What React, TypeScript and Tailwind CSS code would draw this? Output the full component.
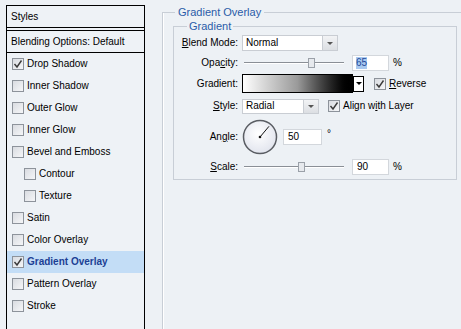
import React from 'react';

type Item = { label: string; checked?: boolean; indent?: boolean; active?: boolean };

const items: Item[] = [
  { label: 'Drop Shadow', checked: true },
  { label: 'Inner Shadow' },
  { label: 'Outer Glow' },
  { label: 'Inner Glow' },
  { label: 'Bevel and Emboss' },
  { label: 'Contour', indent: true },
  { label: 'Texture', indent: true },
  { label: 'Satin' },
  { label: 'Color Overlay' },
  { label: 'Gradient Overlay', checked: true, active: true },
  { label: 'Pattern Overlay' },
  { label: 'Stroke' },
];

function CheckBox({ checked }: { checked?: boolean }) {
  return (
    <span className="flex h-[12px] w-[12px] shrink-0 items-center justify-center border border-[#8d939b] bg-gradient-to-br from-[#d9dce1] to-[#f5f6f8]">
      {checked && (
        <svg width="10" height="10" viewBox="0 0 10 10">
          <polyline points="1.5,5 4,8 8.5,1.5" fill="none" stroke="#3a3a3a" strokeWidth="1.4" />
        </svg>
      )}
    </span>
  );
}

function DropButton() {
  return (
    <span className="flex h-full w-[15px] items-center justify-center border-l border-[#c9cdd3] bg-gradient-to-b from-[#f2f3f5] to-[#dcdfe3]">
      <span className="h-0 w-0 border-x-[3px] border-t-[3px] border-x-transparent border-t-[#555]" />
    </span>
  );
}

function Slider({ thumb }: { thumb: number }) {
  return (
    <div className="relative h-[14px] w-[111px]">
      <div className="absolute left-[3px] top-[6px] h-[1px] w-[100px] bg-[#8a8f96]" />
      <div className="absolute left-[3px] top-[7px] h-[1px] w-[100px] bg-white" />
      <div
        className="absolute top-[2px] h-[10px] w-[7px] border border-[#9aa0a8] bg-[#e6e9ed]"
        style={{ left: thumb }}
      />
    </div>
  );
}

function Label({ children }: { children: React.ReactNode }) {
  return <span className="w-[64px] shrink-0 text-right">{children}</span>;
}

export default function App() {
  return (
    <div className="flex h-[329px] w-[461px] overflow-hidden bg-[#edf1f5] text-[10px] leading-[12px] text-black [font-family:'Liberation_Sans',Arial,sans-serif]">
      {/* styles list */}
      <div className="ml-[6px] mt-[5px] h-[340px] w-[139px] shrink-0 border border-black bg-[#eef2f6]">
        <div className="flex h-[22px] items-center border-b border-black pl-[4px]">Styles</div>
        <div className="h-[3px] border-b border-black" />
        <div className="flex h-[22px] items-center border-b border-black pl-[4px]">Blending Options: Default</div>
        {items.map((it) => (
          <div
            key={it.label}
            className={`flex h-[22px] items-center gap-[3px] ${it.indent ? 'pl-[17px]' : 'pl-[5px]'} ${
              it.active ? 'bg-[#c3ddf6] font-bold text-[#1c3f94]' : ''
            }`}
          >
            <CheckBox checked={it.checked} />
            <span>{it.label}</span>
          </div>
        ))}
      </div>

      {/* options */}
      <div className="ml-[17px] w-[330px] shrink-0 pt-[6px]">
        <fieldset className="h-[340px] border border-[#c8ced6] shadow-[inset_1px_0_0_#ffffff]">
          <legend className="ml-[12px] px-[3px] text-[11px] leading-[13px] text-[#2a5ca8]">Gradient Overlay</legend>
          <fieldset className="ml-[10px] mt-[1px] h-[160px] w-[284px] border border-[#c8ced6]">
            <legend className="ml-[13px] px-[2px] text-[11px] leading-[12px] text-[#2a5ca8]">Gradient</legend>

            <div className="mt-[1px] flex h-[20px] items-center">
              <Label>
                <u>B</u>lend Mode:
              </Label>
              <div className="ml-[4px] flex h-[16px] w-[96px] items-center justify-between border border-[#c9cdd3] bg-white pl-[3px]">
                <span>Normal</span>
                <DropButton />
              </div>
            </div>

            <div className="flex h-[20px] items-center">
              <Label>
                Opa<u>c</u>ity:
              </Label>
              <div className="ml-[3px]">
                <Slider thumb={67} />
              </div>
              <div className="flex h-[16px] w-[37px] items-center border border-[#d3d7dc] bg-white pl-[3px]">
                <span className="bg-[#a9c9ef] text-[#1f4a9a]">65</span>
              </div>
              <span className="ml-[4px]">%</span>
            </div>

            <div className="flex h-[21px] items-center">
              <Label>Gradient:</Label>
              <div className="ml-[4px] h-[19px] w-[111px] border border-black bg-gradient-to-r from-white via-[#9a9a9a] to-black" />
              <div className="flex h-[16px] w-[11px] items-center justify-center border border-black bg-white">
                <span className="h-0 w-0 border-x-[3px] border-t-[3px] border-x-transparent border-t-black" />
              </div>
              <span className="ml-[10px]">
                <CheckBox checked />
              </span>
              <span className="ml-[3px]">
                <u>R</u>everse
              </span>
            </div>

            <div className="mt-[2px] flex h-[20px] items-center">
              <Label>
                <u>S</u>tyle:
              </Label>
              <div className="ml-[4px] flex h-[15px] w-[77px] items-center justify-between border border-[#c9cdd3] bg-white pl-[3px]">
                <span>Radial</span>
                <DropButton />
              </div>
              <span className="ml-[9px]">
                <CheckBox checked />
              </span>
              <span className="ml-[3px]">
                Align w<u>i</u>th Layer
              </span>
            </div>

            <div className="mt-[1px] flex h-[40px] items-center">
              <Label>
                An<u>g</u>le:
              </Label>
              <svg className="ml-[4px]" width="36" height="36" viewBox="0 0 36 36">
                <defs>
                  <radialGradient id="dial" cx="0.45" cy="0.4" r="0.6">
                    <stop offset="0" stopColor="#ffffff" />
                    <stop offset="1" stopColor="#e2e5ee" />
                  </radialGradient>
                </defs>
                <circle cx="18" cy="18" r="16.5" fill="url(#dial)" stroke="#5a5d63" strokeWidth="1.5" />
                <line x1="18" y1="18" x2="27" y2="7.3" stroke="#111" strokeWidth="1" />
                <circle cx="18" cy="18" r="1.3" fill="#111" />
              </svg>
              <div className="ml-[5px] flex h-[16px] w-[39px] items-center border border-[#d3d7dc] bg-white pl-[4px]">
                50
              </div>
              <span className="ml-[5px] -mt-[6px]">°</span>
            </div>

            <div className="flex h-[19px] items-center">
              <Label>
                <u>S</u>cale:
              </Label>
              <div className="ml-[3px]">
                <Slider thumb={57} />
              </div>
              <div className="flex h-[16px] w-[37px] items-center border border-[#d3d7dc] bg-white pl-[4px]">
                90
              </div>
              <span className="ml-[4px]">%</span>
            </div>
          </fieldset>
        </fieldset>
      </div>
    </div>
  );
}
